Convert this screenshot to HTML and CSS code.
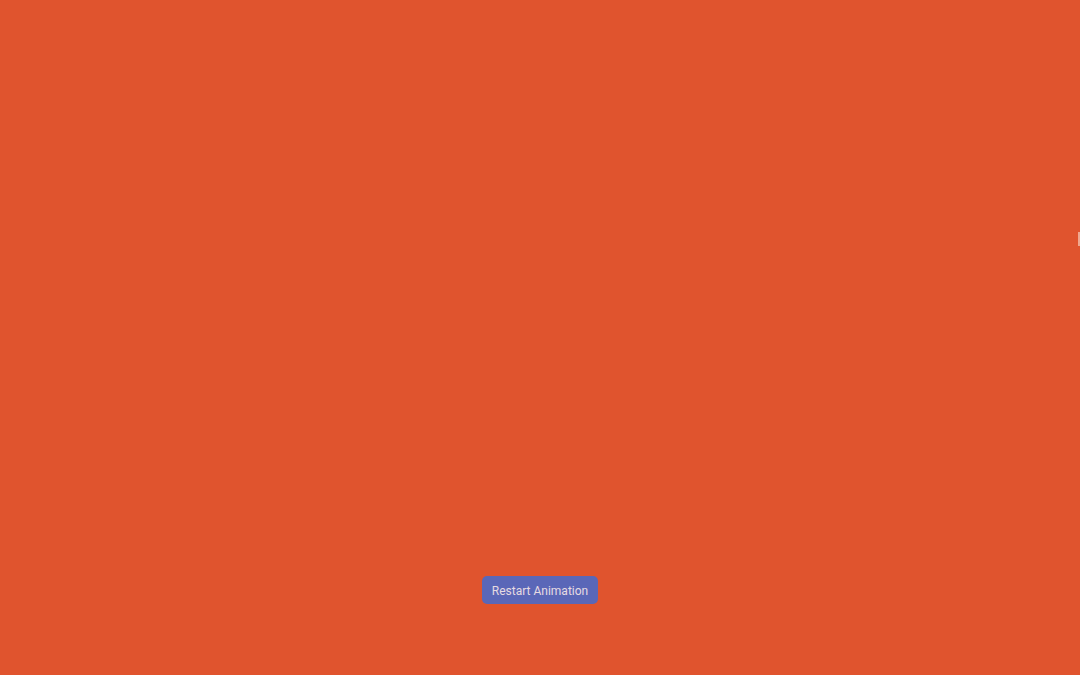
FILE: index.html
```html
<!DOCTYPE html>
<html>
<head>
<meta charset="utf-8">
<link rel="stylesheet" href="styles.css">
</head>
<body>
<div class="stage">
  <div class="flyer"></div>
  <button class="restart">Restart Animation</button>
</div>
</body>
</html>
```
FILE: styles.css
```css
html, body {
  margin: 0;
  padding: 0;
  height: 100%;
  overflow: hidden;
}
body {
  background: #e0542e;
  font-family: Roboto, "Noto Sans", "Liberation Sans", sans-serif;
}
.stage {
  position: relative;
  height: 675px;
  display: flex;
  flex-direction: column;
  justify-content: flex-end;
  align-items: center;
  padding-bottom: 71px;
  box-sizing: border-box;
}
.flyer {
  position: absolute;
  left: 1078px;
  top: 232px;
  width: 40px;
  height: 14px;
  background: #f0a890;
}
.restart {
  width: 116px;
  height: 28px;
  border: none;
  border-radius: 5px;
  background: #5a67b8;
  color: #e6dbe2;
  font-family: Roboto, "Noto Sans", "Liberation Sans", sans-serif;
  font-size: 12px;
  padding: 2px 0 0;
  cursor: pointer;
}
```
